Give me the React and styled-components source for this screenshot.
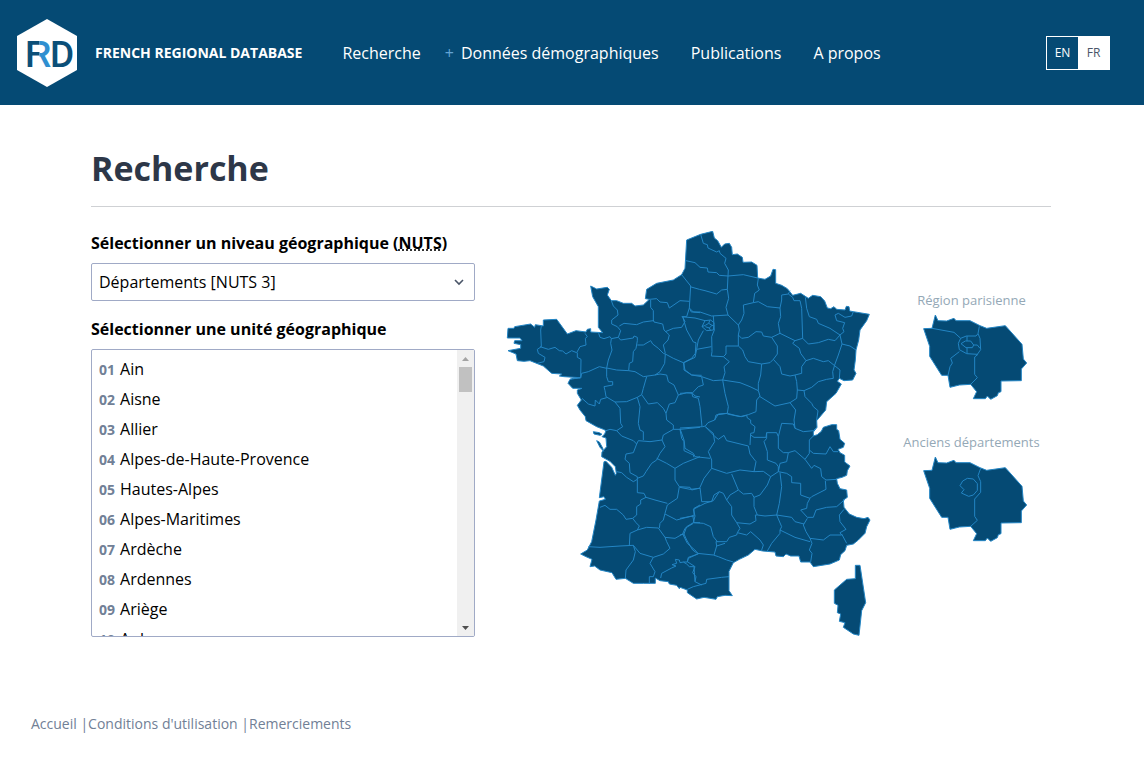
import React, { useRef, useState } from "react";
import styled, { createGlobalStyle } from "styled-components";

const GlobalStyle = createGlobalStyle`
  *, *::before, *::after {
    box-sizing: border-box;
  }

  body {
    margin: 0;
    background: #fff;
    color: #000;
    font-family: "Open Sans", sans-serif;
    font-size: 16px;
    line-height: 24px;
  }
`;

const Header = styled.header`
  display: flex;
  align-items: center;
  min-height: 105px;
  padding: 0 34px 0 17px;
  background: #054a74;
  color: #fff;
`;

const Brand = styled.a`
  display: flex;
  align-items: center;
  gap: 18px;
  margin-right: 40px;
  color: #fff;
  font-size: 14px;
  font-weight: 700;
  text-decoration: none;
  white-space: nowrap;
`;

const Nav = styled.nav`
  display: flex;
  flex: 1;
  gap: 32px;
`;

const NavLink = styled.a`
  color: #fff;
  text-decoration: none;
  white-space: nowrap;
`;

const SubMenu = styled.div`
  display: flex;
  gap: 7px;
  margin-left: -8px;
`;

const Plus = styled.span`
  color: #63a4d4;
`;

const Languages = styled.div`
  display: flex;
  border: 1px solid #fff;
`;

const Language = styled.button`
  width: 31px;
  height: 32px;
  padding: 0;
  border: 0;
  background: ${(props) => (props.$active ? "#fff" : "transparent")};
  color: ${(props) => (props.$active ? "#4a5568" : "#fff")};
  font-family: inherit;
  font-size: 12px;
  cursor: pointer;
`;

const Main = styled.main`
  padding: 39px 93px 0 91px;
`;

const Title = styled.h1`
  margin: 0 0 24px;
  padding-bottom: 14px;
  border-bottom: 1px solid #cfd1d4;
  color: #2d3748;
  font-size: 34px;
  font-weight: 700;
  line-height: 48px;
`;

const Columns = styled.div`
  display: flex;
  align-items: flex-start;
`;

const SearchForm = styled.form`
  flex: 0 0 384px;
  margin-right: 25px;
`;

const Label = styled.label`
  display: block;
  margin-bottom: 8px;
  font-weight: 700;

  abbr {
    text-decoration: underline dotted;
  }
`;

const SelectBox = styled.div`
  display: grid;
  align-items: center;
  margin-bottom: 16px;

  select,
  svg {
    grid-area: 1 / 1;
  }

  svg {
    justify-self: end;
    margin-right: 10px;
    pointer-events: none;
  }
`;

const Select = styled.select`
  width: 100%;
  height: 38px;
  padding: 0 7px;
  border: 1px solid #a0aac6;
  border-radius: 2px;
  background: #fff;
  color: #000;
  font-family: inherit;
  font-size: 16px;
  appearance: none;
`;

const ListBox = styled.div`
  display: flex;
  height: 288px;
  border: 1px solid #a0aac6;
  border-radius: 2px;
  overflow: hidden;
`;

const UnitList = styled.ul`
  flex: 1;
  margin: 0;
  padding: 4px 0;
  list-style: none;
  overflow-y: auto;
  scrollbar-width: none;
`;

const Unit = styled.button`
  display: block;
  width: 100%;
  height: 30px;
  padding: 0 7px;
  border: 0;
  background: none;
  color: #000;
  font-family: inherit;
  font-size: 16px;
  line-height: 30px;
  text-align: left;
  cursor: pointer;
`;

const Code = styled.span`
  margin-right: 5px;
  color: #718096;
  font-size: 14px;
  font-weight: 700;
`;

const ScrollBar = styled.div`
  display: flex;
  flex: 0 0 17px;
  flex-direction: column;
  align-items: center;
  background: #f0f0f0;
`;

const ScrollButton = styled.button`
  display: flex;
  align-items: center;
  justify-content: center;
  width: 17px;
  height: 17px;
  padding: 0;
  border: 0;
  background: none;
`;

const Thumb = styled.div`
  width: 13px;
  height: 25px;
  margin-bottom: auto;
  background: #c1c1c1;
`;

const Regions = styled.svg`
  display: block;
  flex: 0 1 auto;
  fill: #054a74;
  stroke: #2385c4;
  stroke-width: 3;
  stroke-linejoin: round;

  .borders {
    fill: none;
  }
`;

const Insets = styled.div`
  display: flex;
  flex: 1;
  flex-direction: column;
  align-items: center;
  gap: 32px;
  margin-left: 12px;
  padding-top: 60px;
`;

const Inset = styled.figure`
  display: flex;
  flex-direction: column;
  align-items: center;
  gap: 4px;
  margin: 0;
`;

const InsetLabel = styled.figcaption`
  color: #94a8b6;
  font-size: 13px;
  line-height: 18px;
  white-space: nowrap;
`;

const Footer = styled.footer`
  display: flex;
  padding: 71px 31px 32px;
  color: #718096;
  font-size: 14px;
`;

const FooterLink = styled.a`
  color: inherit;
  text-decoration: none;
`;

const departements = [
  ["01", "Ain"],
  ["02", "Aisne"],
  ["03", "Allier"],
  ["04", "Alpes-de-Haute-Provence"],
  ["05", "Hautes-Alpes"],
  ["06", "Alpes-Maritimes"],
  ["07", "Ardèche"],
  ["08", "Ardennes"],
  ["09", "Ariège"],
  ["10", "Aube"],
];

const mainland =
  "M560,60 602,43 638,34 643,54 653,62 664,82 674,72 688,70 695,82 697,104 712,102 727,112 729,127 755,126 771,136 773,174 795,178 812,168 819,148 827,149 827,190 845,196 862,206 878,226 902,220 925,235 938,226 962,230 974,243 982,264 992,266 1002,260 1010,268 1035,270 1039,259 1047,260 1049,273 1060,275 1108,283 1100,302 1080,330 1076,360 1068,390 1066,420 1062,450 1068,460 1058,480 1032,482 1018,475 1012,484 1024,492 1008,520 980,545 977,570 " +
  "950,602 951,622 940,636 940,648 952,644 964,634 970,622 995,614 1010,614 1010,628 1016,632 1020,658 1034,670 1030,682 1014,688 1020,698 1034,706 1034,726 1050,738 1042,752 1040,766 1026,772 1010,776 1012,790 1020,806 1040,810 1042,832 1030,840 1032,862 1048,882 1070,892 1092,896 1104,892 1110,900 1100,920 1095,940 1075,960 1060,972 1040,976 1035,992 1022,1004 1018,1020 990,1032 940,1040 930,1026 902,1026 897,1008 872,1008 858,1002 850,1010 828,1008 825,996 788,993 765,988 745,1005 718,1018 700,1028 687,1054 687,1112 697,1127 675,1126 652,1130 648,1138 612,1132 590,1137 562,1118 562,1110 " +
  "540,1102 538,1106 530,1096 508,1092 505,1085 480,1082 466,1074 466,1090 430,1090 400,1090 376,1075 348,1078 336,1058 300,1050 284,1038 270,1040 276,1018 258,1010 242,1002 262,990 275,965 288,900 298,843 316,838 312,830 298,833 312,725 318,724 335,742 346,766 349,760 346,740 330,724 305,710 306,696 320,680 318,654 306,650 314,642 318,632 310,628 290,620 258,602 256,590 240,570 232,556 " +
  "244,540 232,520 232,510 246,505 218,505 204,490 210,478 240,473 192,470 178,468 185,462 155,460 130,438 90,422 72,424 52,422 48,402 24,392 62,385 62,374 42,370 44,362 66,362 60,354 22,354 24,325 42,325 44,320 92,312 104,322 106,314 130,318 130,300 170,298 202,342 228,332 258,336 262,328 272,326 272,336 308,338 295,322 295,260 278,230 272,198 290,207 322,202 328,208 322,225 334,242 350,242 370,250 395,250 405,258 430,255 448,238 436,236 440,208 470,190 520,180 545,164 555,145Z";

const islands =
  "M280,635 298,638 306,643 300,646 282,642Z M290,662 298,666 308,684 311,694 300,682Z " +
  "M1066,1036 1080,1036 1097,1148 1085,1172 1077,1246 1060,1242 1030,1222 1035,1208 1018,1204 1022,1182 1012,1178 1014,1156 1003,1150 1003,1110 1040,1078 1066,1076Z";

const northWest = [
  "M124,318 122,330 124,380 112,388 115,400 135,412 132,425 112,430",
  "M120,380 145,388 165,382 178,392 188,393 198,402 215,392 230,398 240,380 258,375 256,355 262,350 255,340",
  "M232,398 232,412 243,418 242,473",
  "M296,340 300,352 312,356 330,350 334,356 354,352",
  "M334,356 332,370 336,390 325,420 320,444",
  "M210,478 222,474 242,474 245,460 265,455 298,440 320,445",
  "M334,242 340,258 352,270 354,285 335,300 335,312 352,320 362,332 355,352 362,360 400,354 402,348 412,352",
  "M358,318 372,310 410,314 430,306 460,302",
  "M452,240 452,262 460,272 460,300 462,306 488,312 492,330 508,345 504,360 490,375 496,400",
  "M448,238 470,236 480,246 502,248 508,264 540,242 568,244",
  "M545,164 572,198 568,264 580,276 600,278",
  "M568,264 560,290 547,290",
  "M496,335 520,325 545,322 555,305 548,290 560,330 580,366 588,368 586,400 575,415 550,428",
  "M496,402 520,415 550,428 555,450 575,465 605,466",
  "M412,352 412,362 408,385 400,395 398,425 388,430 386,452",
  "M412,375 430,375 452,362 458,372 475,385 490,400 496,402 494,430 480,455 465,465",
  "M320,444 350,450 386,452 405,455 430,470 465,465 480,462 500,465 505,485 522,495 535,525 525,548 508,552 498,580",
  "M320,444 320,470 325,485 338,485 338,495 312,500 315,512 318,530 345,546 380,545 412,532 425,524",
  "M246,535 265,552 285,558 286,540 298,552 302,538 320,533",
  "M440,470 430,505 425,524 445,552 472,548 490,565 498,580",
  "M345,546 360,565 362,610 368,620 350,632 330,628 318,632",
  "M412,532 420,560 415,610 420,630 430,635 430,660",
  "M535,525 560,518 578,520 585,528 600,531",
];

const northEast = [
  "M62,43 70,70 82,74 84,84 110,96 118,92 120,100 138,115 134,130 145,150 144,168",
  "M18,122 45,128 60,142 82,144 84,156 110,158 118,166 144,168 190,164 233,174",
  "M30,200 58,208 75,212 110,222 125,210 142,208",
  "M144,168 142,208 146,235 138,262 144,285 175,315 178,330 175,345 175,378 138,378 138,402 130,410 94,408",
  "M235,175 232,195 238,210 224,220 220,248 190,255 192,280 185,300 175,315",
  "M30,268 34,276 60,276 95,288 144,285",
  "M220,248 235,245 262,260 300,264 305,240 305,225 325,222 330,212",
  "M325,222 338,232 342,242 360,242 365,265 368,355",
  "M300,264 302,290 295,310 300,340 345,362 368,355 385,372 415,368 445,358 465,362 480,345",
  "M175,345 185,355 205,352 228,335 245,336 250,348 275,352 300,340",
  "M345,362 338,370 358,385 362,400 378,422 365,440 365,460 345,465",
  "M376,232 380,265 388,290 410,298 415,310 450,325 480,345 486,372 510,378 528,390",
  "M480,345 492,335 488,325 494,308 470,302 465,285 475,280 495,292 515,288 520,275",
  "M486,372 475,405 465,432 458,455 460,475 440,478 415,485 395,502 372,512 352,510 350,485 345,465",
  "M378,422 400,415 430,425 445,422 480,450 478,475",
  "M280,418 300,440 305,462 330,468 345,465",
  "M275,352 292,378 292,402 280,418 270,428 245,432 242,465 235,490 235,512",
  "M175,378 188,390 195,410 205,425 245,432",
  "M100,288 103,330 95,350 96,395 94,408",
  "M94,380 50,388 55,360 70,332",
  "M5,290 45,294 75,302 92,300 102,308 100,330 80,332 66,320 75,302",
  "M66,320 76,316 86,310 96,316 88,324 76,320 M86,310 90,300 M88,324 92,332 M96,316 103,318",
  "M50,388 45,412 12,428 12,450 35,465 65,470 100,482 128,480",
  "M130,410 148,425 132,440 135,458 128,480 180,488 210,500 235,512 240,528 230,540 228,575 205,584 180,590 142,582",
  "M128,480 135,520 145,560 142,580 115,582 104,600",
  "M65,470 70,495 55,500 36,520 38,530 55,535 60,560 66,620",
  "M0,520 36,518",
  "M240,530 285,558 330,548 350,535 352,510",
  "M330,548 347,570 342,600 345,625",
  "M372,512 375,530 395,550 400,560 414,572 410,600",
];

const southWest = [
  "M350,92 365,108 400,122 410,132 415,122 450,125 486,120 490,105 520,88 520,75 500,60 498,40",
  "M520,88 540,88 600,82",
  "M540,88 545,115 552,125 552,152 580,165 582,172",
  "M486,120 495,140 480,160 470,180 455,190 438,215 430,228 412,235",
  "M410,132 400,158 378,162 375,178 388,190 390,218 412,230 412,238 400,245 380,232 365,218 350,215",
  "M470,175 500,190 525,205 550,190 600,170",
  "M525,205 525,240 538,260 532,295 502,315",
  "M412,238 412,278 432,280 438,292 465,300 502,310",
  "M538,260 570,262 575,270 600,264",
  "M438,292 422,300 422,312 410,320 410,345 398,355 378,358 370,345 350,328 330,328 315,316 300,322",
  "M398,355 408,368 418,378 412,390 390,400 388,436",
  "M412,390 440,382 475,384 495,412 525,415 548,402",
  "M502,315 495,340 490,360 480,370 478,384",
  "M495,342 530,360 575,348 582,348 582,325 600,315",
  "M265,440 300,442 360,438 400,436 420,460 460,472",
  "M400,436 406,455 400,480 378,510 376,535",
  "M460,472 490,462 510,445 500,425 495,412",
  "M460,472 450,490 465,515 460,530 448,530 448,550",
  "M548,402 555,385 580,370",
  "M548,402 562,430 590,455 595,462 565,472 562,486 550,486",
  "M482,534 485,520 515,504 528,498 516,494 530,490 526,478 538,480 540,488 550,486 560,492 568,500 582,500 585,545",
  "M578,345 582,368 600,368",
];

const southEast = [
  "M0,84 68,80 76,78 84,68 104,60 108,45 142,40",
  "M142,40 165,46 185,50 200,46 202,54 212,60 212,70 225,80 222,98 212,100 210,135",
  "M76,80 105,110 115,118 132,106 140,122 205,138 210,162 228,185 222,215",
  "M76,80 100,100 104,125 85,155 95,180 95,205 140,220 180,210 222,215 250,214 272,230",
  "M0,86 12,120 15,145 40,160 45,170 90,175",
  "M212,105 222,112 258,112 260,98 290,98 295,110",
  "M260,98 260,115 252,125 262,155 262,180 288,190 295,200 295,215",
  "M345,85 340,72 305,70 295,110 295,145 310,158 325,158 345,152 375,178 395,205 402,196 422,206 425,230 438,240 470,238",
  "M345,85 370,95 400,92 410,82 M375,178 388,160 388,120 400,108",
  "M388,150 400,160 438,162 450,140 460,155 474,155",
  "M325,158 320,185 300,190 295,215",
  "M436,242 438,268 395,290 390,295 362,285 362,250 335,248 335,230 320,220 295,215 272,230",
  "M300,218 305,260 298,310 290,345",
  "M272,230 262,255 240,285 222,292 215,280 190,282 175,270 155,222",
  "M95,205 72,235 60,262 65,305 95,305 102,285 118,275 130,280 140,300",
  "M0,262 30,268 60,265",
  "M175,270 150,285 140,300 155,320 155,345 170,368 210,372 228,362 226,345 232,345 222,320 222,292",
  "M232,345 255,348 290,345 335,352 345,365 372,372",
  "M390,295 382,310 380,325 362,330 382,352 400,352 408,330 440,322 470,320 495,298",
  "M382,355 370,375 378,395 390,415 430,420 450,405 485,405 480,398 498,388 480,365 478,345 492,328",
  "M485,402 500,430",
  "M290,345 305,380 300,390 345,412 390,425",
  "M300,390 300,400 275,430 262,453",
  "M390,415 396,430 388,450 396,460 392,486",
  "M170,368 180,385 172,398 200,405 212,395 240,420 250,435 245,450",
  "M118,275 100,302 75,310 40,328 45,348 40,368 70,370 92,380 100,410 112,425",
  "M108,425 140,425 148,412 170,405 172,398 M108,425 110,438 135,430 M110,438 102,465",
  "M40,368 20,380 12,402 20,420 38,450 52,460 100,465 115,470 140,480 160,486",
  "M0,355 40,348 M0,405 12,402",
  "M52,462 25,475 22,485 45,500 38,518 48,530 45,545 65,555",
  "M22,568 40,560 78,550 80,538 125,532 147,530",
];

const parisOutline =
  "M136,90 144,107 170,108 192,100 198,107 240,107 270,122 290,130 346,122 396,178 400,222 410,234 394,252 394,287 333,288 333,320 325,323 322,332 302,343 292,333 286,341 250,341 260,320 242,298 208,300 180,307 174,271 155,271 119,214 119,184 101,131 126,130Z";

const parisBorders = [
  "M126,130 192,142 212,160 229,153 258,153 264,146 268,124",
  "M212,160 205,175 208,194 230,206 262,208 272,194 270,160 264,146",
  "M208,200 182,220 187,234 180,245 174,271",
  "M264,208 254,216 254,268 262,278 242,298",
  "M213,176 226,168 242,168 251,180 247,188 228,188Z",
  "M231,153 231,168 M251,180 262,180 270,190 M231,188 231,206",
];

const oldBorders = [
  "M272,124 264,146 272,164 272,196 254,216 254,268 262,280 242,298",
  "M232,154 250,156 262,170 262,190 250,204 236,208 214,198 222,188 210,176 218,162Z",
];

// F and R share the cut at x = 23, each one fades out on its side
const Logo = () => (
  <svg width="60" height="70" viewBox="0 0 60 70" aria-hidden="true">
    <defs>
      <linearGradient
        id="cut-f"
        gradientUnits="userSpaceOnUse"
        x1="22"
        y1="0"
        x2="23"
        y2="0"
      >
        <stop offset="0" stopColor="#0b4f78" />
        <stop offset="1" stopColor="#0b4f78" stopOpacity="0" />
      </linearGradient>
      <linearGradient
        id="cut-r"
        gradientUnits="userSpaceOnUse"
        x1="22"
        y1="0"
        x2="23"
        y2="0"
      >
        <stop offset="0" stopColor="#2f8fd0" stopOpacity="0" />
        <stop offset="1" stopColor="#2f8fd0" />
      </linearGradient>
    </defs>
    <path d="M30 1 60 18V52L30 69 0 52V18Z" fill="#fff" />
    <text
      y="49"
      fontFamily="Roboto, sans-serif"
      fontSize="37"
      fontWeight="500"
    >
      <tspan x="8" fill="url(#cut-f)">
        F
      </tspan>
      <tspan x="11" fill="url(#cut-r)">
        R
      </tspan>
      <tspan x="33" fill="#0b4f78">
        D
      </tspan>
    </text>
  </svg>
);

const Borders = ({ lines, transform }) => (
  <g className="borders" transform={transform}>
    {lines.map((d, i) => (
      <path key={i} d={d} />
    ))}
  </g>
);

const FranceMap = () => (
  <Regions
    width="380"
    height="410"
    viewBox="0 33 1140 1230"
    role="img"
    aria-label="France"
  >
    <path d={mainland} />
    <path d={islands} />
    <Borders lines={northWest} />
    <Borders lines={northEast} transform="translate(540 0)" />
    <Borders lines={southWest} transform="translate(0 540)" />
    <Borders lines={southEast} transform="translate(540 540)" />
  </Regions>
);

const InsetMap = ({ label, lines }) => (
  <Inset>
    <InsetLabel>{label}</InsetLabel>
    <Regions width="112" height="88" viewBox="78 84 336 264">
      <path d={parisOutline} />
      <Borders lines={lines} />
    </Regions>
  </Inset>
);

const App = () => {
  const [language, setLanguage] = useState("FR");
  const listRef = useRef(null);

  const scrollList = (amount) => {
    listRef.current.scrollBy(0, amount);
  };

  return (
    <>
      <GlobalStyle />
      <Header>
        <Brand href="#">
          <Logo />
          FRENCH REGIONAL DATABASE
        </Brand>
        <Nav>
          <NavLink href="#">Recherche</NavLink>
          <SubMenu>
            <Plus>+</Plus>
            <NavLink href="#">Données démographiques</NavLink>
          </SubMenu>
          <NavLink href="#">Publications</NavLink>
          <NavLink href="#">A propos</NavLink>
        </Nav>
        <Languages>
          {["EN", "FR"].map((code) => (
            <Language
              key={code}
              type="button"
              $active={language === code}
              onClick={() => setLanguage(code)}
            >
              {code}
            </Language>
          ))}
        </Languages>
      </Header>

      <Main>
        <Title>Recherche</Title>
        <Columns>
          <SearchForm>
            <Label htmlFor="level">
              Sélectionner un niveau géographique (
              <abbr title="Nomenclature des unités territoriales statistiques">
                NUTS
              </abbr>
              )
            </Label>
            <SelectBox>
              <Select id="level">
                <option>Départements [NUTS 3]</option>
              </Select>
              <svg width="12" height="12" viewBox="0 0 12 12" fill="none">
                <path d="M2 4 6 8 10 4" stroke="#4a5568" strokeWidth="1.6" />
              </svg>
            </SelectBox>
            <Label as="div" id="unit-label">
              Sélectionner une unité géographique
            </Label>
            <ListBox>
              <UnitList ref={listRef} aria-labelledby="unit-label">
                {departements.map(([code, name]) => (
                  <li key={code}>
                    <Unit type="button">
                      <Code>{code}</Code>
                      {name}
                    </Unit>
                  </li>
                ))}
              </UnitList>
              <ScrollBar>
                <ScrollButton
                  type="button"
                  aria-label="Haut"
                  onClick={() => scrollList(-30)}
                >
                  <svg width="7" height="4" viewBox="0 0 7 4" fill="#a3a3a3">
                    <path d="M0 4 3.5 0 7 4Z" />
                  </svg>
                </ScrollButton>
                <Thumb />
                <ScrollButton
                  type="button"
                  aria-label="Bas"
                  onClick={() => scrollList(30)}
                >
                  <svg width="7" height="4" viewBox="0 0 7 4" fill="#505050">
                    <path d="M0 0 3.5 4 7 0Z" />
                  </svg>
                </ScrollButton>
              </ScrollBar>
            </ListBox>
          </SearchForm>
          <FranceMap />
          <Insets>
            <InsetMap label="Région parisienne" lines={parisBorders} />
            <InsetMap label="Anciens départements" lines={oldBorders} />
          </Insets>
        </Columns>
      </Main>

      <Footer>
        <FooterLink href="#">Accueil</FooterLink>&nbsp;|
        <FooterLink href="#">Conditions d'utilisation</FooterLink>&nbsp;|
        <FooterLink href="#">Remerciements</FooterLink>
      </Footer>
    </>
  );
};

export default App;
